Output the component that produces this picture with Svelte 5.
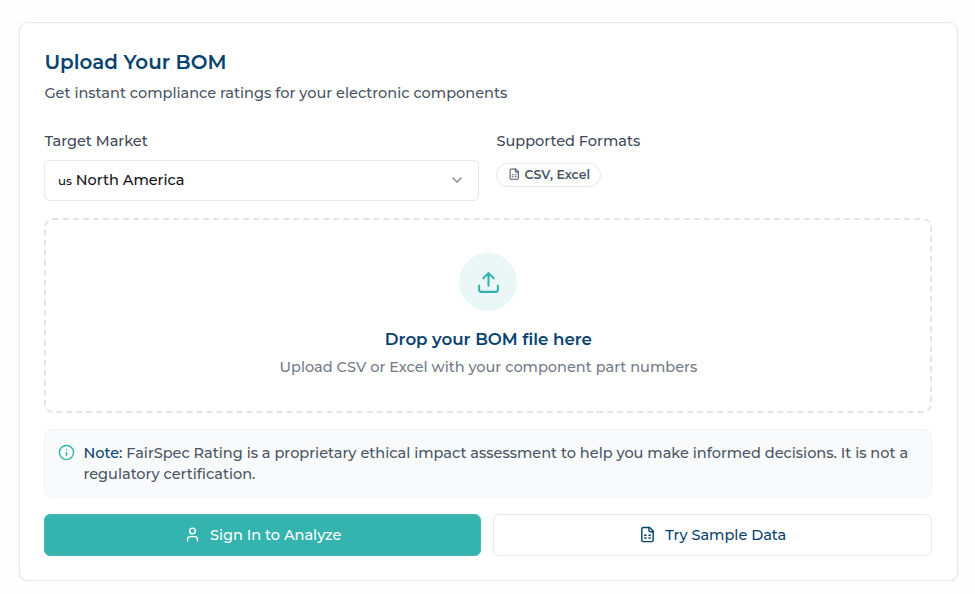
<script>
  let market = { code: "us", name: "North America" };
</script>

{#snippet sheetIcon(size)}
  <svg class="icon" width={size} height={size} viewBox="0 0 24 24">
    <path d="M15 2H6a2 2 0 0 0-2 2v16a2 2 0 0 0 2 2h12a2 2 0 0 0 2-2V7Z" />
    <path d="M14 2v4a2 2 0 0 0 2 2h4" />
    <path d="M8 13h2M14 13h2M8 17h2M14 17h2" />
  </svg>
{/snippet}

<main class="card">
  <header>
    <h1>Upload Your BOM</h1>
    <p class="subtitle">Get instant compliance ratings for your electronic components</p>
  </header>

  <div class="fields">
    <div class="field">
      <div class="label">Target Market</div>
      <button class="select">
        <span class="code">{market.code}</span>
        <span>{market.name}</span>
        <svg class="icon chevron" width="16" height="16" viewBox="0 0 24 24">
          <path d="m6 9 6 6 6-6" />
        </svg>
      </button>
    </div>
    <div class="field">
      <div class="label">Supported Formats</div>
      <div class="badge">
        {@render sheetIcon(12.4)}
        <span>CSV, Excel</span>
      </div>
    </div>
  </div>

  <section class="dropzone">
    <div class="circle">
      <svg class="icon" width="25" height="25" viewBox="0 0 24 24">
        <path d="M12 15V3M7 8l5-5 5 5M21 15v4a2 2 0 0 1-2 2H5a2 2 0 0 1-2-2v-4" />
      </svg>
    </div>
    <h2>Drop your BOM file here</h2>
    <p>Upload CSV or Excel with your component part numbers</p>
  </section>

  <div class="note">
    <svg class="icon" width="17" height="17" viewBox="0 0 24 24">
      <circle cx="12" cy="12" r="10" />
      <path d="M12 16v-4M12 8h.01" />
    </svg>
    <p>
      <strong>Note:</strong> FairSpec Rating is a proprietary ethical impact assessment to help you make informed decisions. It is not a<br />
      regulatory certification.
    </p>
  </div>

  <div class="actions">
    <button class="primary">
      <svg class="icon" width="17" height="17" viewBox="0 0 24 24">
        <circle cx="12" cy="7" r="4" />
        <path d="M19 21v-2a4 4 0 0 0-4-4H9a4 4 0 0 0-4 4v2" />
      </svg>
      <span>Sign In to Analyze</span>
    </button>
    <button class="secondary">
      {@render sheetIcon(17)}
      <span>Try Sample Data</span>
    </button>
  </div>
</main>

<style>
  :global(body) {
    background: #fefefe;
  }
  :global(#app) {
    display: flow-root;
  }
  .card,
  .card * {
    box-sizing: border-box;
  }
  .card {
    width: 939.8px;
    height: 559px;
    margin: 22px 0 0 18.5px;
    padding: 25px 24.9px 0;
    border: 1px solid #e7e8ed;
    border-radius: 9px;
    background: #fff;
    box-shadow: 0 1px 2px rgba(0, 0, 0, 0.08);
    font-family: Montserrat, Inter, sans-serif;
    font-size: 14.53px;
    font-weight: 500;
    color: #4b5563;
  }
  h1,
  h2,
  p {
    margin: 0;
  }
  button {
    font: inherit;
  }
  .icon {
    flex: none;
    fill: none;
    stroke: currentColor;
    stroke-width: 2;
    stroke-linecap: round;
    stroke-linejoin: round;
  }
  h1 {
    font-size: 19.9px;
    font-weight: 600;
    line-height: 28px;
    color: #08436f;
  }
  .subtitle {
    margin-top: 7px;
    line-height: 20px;
    white-space: nowrap;
  }
  .fields {
    display: grid;
    grid-template-columns: 435px 1fr;
    column-gap: 17px;
    height: 76px;
    margin-top: 26px;
  }
  .label {
    line-height: 24px;
    color: #414957;
  }
  .select {
    display: flex;
    align-items: center;
    width: 100%;
    height: 41px;
    margin-top: 7px;
    padding: 0 13px 1px 12.5px;
    border: 1px solid #e5e7eb;
    border-radius: 6px;
    background: #fff;
    color: #111;
  }
  .code {
    margin-right: 4px;
    font-size: 11.8px;
    padding-top: 2px;
  }
  .chevron {
    margin-left: auto;
    color: #868686;
  }
  .badge {
    display: inline-flex;
    align-items: center;
    justify-content: center;
    gap: 4.5px;
    width: 105px;
    height: 24px;
    margin-top: 10px;
    padding-bottom: 1px;
    border: 1px solid #e5e7eb;
    border-radius: 12px;
    font-size: 12.45px;
    font-weight: 600;
    white-space: nowrap;
  }
  .dropzone {
    display: flex;
    flex-direction: column;
    align-items: center;
    height: 195px;
    margin-top: 13px;
    padding-top: 33px;
    border: 2px dashed #e3e4ea;
    border-radius: 9px;
  }
  .circle {
    display: grid;
    place-items: center;
    width: 58px;
    height: 58px;
    border-radius: 50%;
    background: #eaf7f6;
    color: #34b3ae;
  }
  h2 {
    margin-top: 15px;
    font-size: 16.65px;
    font-weight: 600;
    line-height: 26px;
    color: #08436f;
  }
  .dropzone p {
    margin-top: 4px;
    line-height: 22px;
    color: #747b87;
  }
  .note {
    display: flex;
    gap: 8px;
    height: 69px;
    margin-top: 16px;
    padding: 13px 13px 0;
    border: 1px solid #f3f4f6;
    border-radius: 8px;
    background: #f8fafc;
  }
  .note .icon {
    margin-top: 1px;
    color: #34b3ae;
  }
  .note p {
    line-height: 21px;
    white-space: nowrap;
  }
  strong {
    font-weight: 500;
    color: #08436f;
  }
  .actions {
    display: flex;
    gap: 12px;
    margin-top: 16px;
  }
  .actions button {
    display: flex;
    align-items: center;
    justify-content: center;
    gap: 9px;
    height: 42px;
    padding: 0 0 1px;
    border-radius: 6px;
  }
  .primary {
    width: 436.6px;
    border: 1px solid #42b8b3;
    background: #35b3ae;
    color: #fff;
  }
  .secondary {
    flex: 1;
    border: 1px solid #e5e7eb;
    background: #fff;
    color: #08436f;
  }
</style>
